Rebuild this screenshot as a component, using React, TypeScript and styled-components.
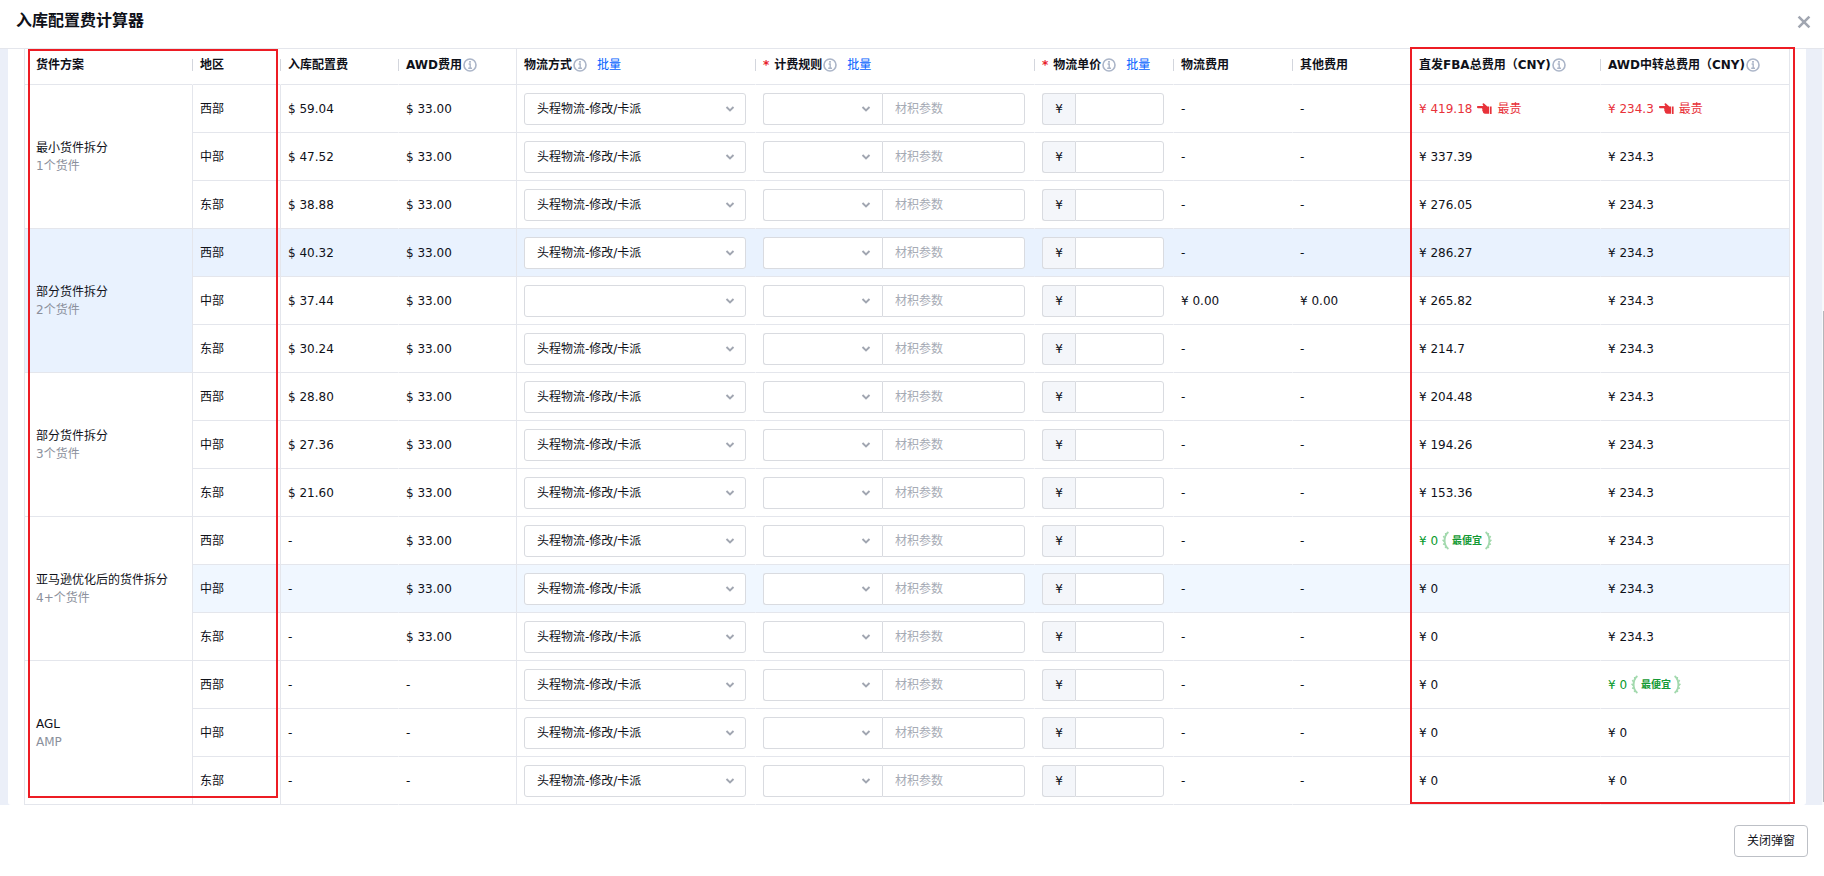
import React from "react";
import styled, { createGlobalStyle, css } from "styled-components";

const line = "#e4e6ec";

const GlobalStyle = createGlobalStyle`
  * { box-sizing: border-box; }
  body {
    margin: 0;
    background: #fff;
    color: #0f1119;
    font: 12px/18px "DejaVu Sans", "Noto Sans CJK SC", sans-serif;
  }
  button, input, select { font: inherit; color: inherit; }
`;

const Dialog = styled.div`
  min-height: 100vh;
  display: flex;
  flex-direction: column;
`;

const TitleBar = styled.header`
  display: flex;
  align-items: flex-start;
  justify-content: space-between;
  height: 49px;
  padding: 9px 12px 0 16px;
  border-bottom: 1px solid ${line};
`;

const Title = styled.h1`
  margin: 0;
  font-size: 16px;
  line-height: 24px;
  font-weight: 700;
`;

const CloseIconButton = styled.button`
  display: flex;
  margin-top: 5px;
  padding: 0;
  border: 0;
  background: none;
  color: #a1a6b1;
`;

const Body = styled.main`
  position: relative;
  padding: 0 18px 0 8px;
  background: #ebeff8;
`;

const ScrollThumb = styled.div`
  position: absolute;
  right: 0;
  bottom: 3px;
  width: 1px;
  height: 65%;
  background: #b4b6bb;
`;

const ScrollTrack = styled.div`
  position: absolute;
  right: 0;
  top: 0;
  bottom: 0;
  width: 2px;
  background: #f7f8fa;
`;

const Card = styled.section`
  padding: 0 16px;
  background: #fff;
  border-radius: 0 0 3px 3px;
`;

const TableArea = styled.div`
  position: relative;
`;

const Highlight = styled.div<{ $side: "left" | "right" }>`
  position: absolute;
  border: 2px solid #ed1c24;
  pointer-events: none;
  ${(p) =>
    p.$side === "left"
      ? css`left: 4px; top: 0; bottom: 7px; width: 14.15%;`
      : css`right: -5px; top: -2px; bottom: 1px; width: 21.8%;`}
`;

const Table = styled.table`
  width: 100%;
  table-layout: fixed;
  border-collapse: separate;
  border-spacing: 0;
  border-left: 1px solid ${line};
`;

const HeadCell = styled.th<{ $edge?: boolean; $tick?: boolean; $first?: boolean }>`
  position: relative;
  height: 36px;
  padding: 0 0 4px ${(p) => (p.$first ? 11 : 7)}px;
  border-bottom: 1px solid ${line};
  border-right: 1px solid ${(p) => (p.$edge ? line : "transparent")};
  text-align: left;
  vertical-align: middle;
  font-weight: 700;
  white-space: nowrap;
  ${(p) =>
    p.$tick &&
    css`
      &::after {
        content: "";
        position: absolute;
        right: -1px;
        top: 10px;
        width: 1px;
        height: 12px;
        background: #d3d6dd;
      }
    `}
`;

const HeadContent = styled.div`
  display: flex;
  align-items: center;
  gap: 1px;
`;

const Required = styled.span`
  margin-right: 4px;
  color: #e8202c;
  font-weight: 700;
`;

const BatchLink = styled.a`
  margin-left: 9px;
  color: #0060ff;
  font-weight: 400;
  text-decoration: none;
`;

const Row = styled.tr<{ $tone?: string }>`
  background: ${(p) => p.$tone ?? "#fff"};
`;

const Cell = styled.td<{ $edge?: boolean }>`
  height: 48px;
  padding: 0 9px 0 7px;
  border-bottom: 1px solid ${line};
  border-right: 1px solid ${(p) => (p.$edge ? line : "transparent")};
  white-space: nowrap;
`;

const PlanCell = styled.th<{ $tone?: string }>`
  padding: 0 0 0 11px;
  border-bottom: 1px solid ${line};
  border-right: 1px solid ${line};
  background: ${(p) => p.$tone ?? "#fff"};
  text-align: left;
  font-weight: 400;
`;

const PlanNote = styled.div`
  color: #8b909c;
`;

const SelectBox = styled.div`
  position: relative;
  display: flex;
  flex: 1;
  min-width: 0;
`;

const Chevron = styled.svg`
  position: absolute;
  right: 11px;
  top: 12px;
  pointer-events: none;
`;

const Select = styled.select<{ $joined?: boolean }>`
  appearance: none;
  width: 100%;
  height: 32px;
  padding: 0 28px 0 12px;
  border: 1px solid #d9dbe0;
  border-right-width: ${(p) => (p.$joined ? 0 : 1)}px;
  border-radius: ${(p) => (p.$joined ? "3px 0 0 3px" : "3px")};
  background: #fff;
`;

const Controls = styled.div`
  display: flex;
`;

const RuleSelectBox = styled(SelectBox)`
  flex: 0 0 119px;
`;

const Input = styled.input`
  flex: 1;
  min-width: 0;
  height: 32px;
  padding: 0 12px;
  border: 1px solid #d9dbe0;
  border-radius: 0 3px 3px 0;
  background: #fff;
  &::placeholder { color: #a6abb5; opacity: 1; }
`;

const Prefix = styled.span`
  display: flex;
  align-items: center;
  justify-content: center;
  width: 33px;
  height: 32px;
  border: 1px solid #d9dbe0;
  border-right: 0;
  border-radius: 3px 0 0 3px;
  background: #f4f6fa;
`;

const Amount = styled.span<{ $tone?: "high" | "low" }>`
  display: flex;
  align-items: center;
  gap: ${(p) => (p.$tone === "low" ? 4 : 5)}px;
  color: ${(p) => (p.$tone === "high" ? "#e8323a" : p.$tone === "low" ? "#0a9a2c" : "inherit")};
`;

const CheapBadge = styled.span`
  display: flex;
  align-items: center;
  gap: 2px;
  color: #149a35;
  font-size: 10px;
  font-weight: 700;
`;

const BadgeText = styled.span`
  padding-top: 1px;
`;

const Footer = styled.footer`
  display: flex;
  justify-content: flex-end;
  padding: 20px 16px;
`;

const CloseButton = styled.button`
  height: 32px;
  padding: 0 12px;
  border: 1px solid #bdc0c6;
  border-radius: 4px;
  background: #fff;
`;

const InfoIcon = () => (
  <svg width="14" height="14" viewBox="0 0 14 14" fill="none" stroke="#abb5c8" aria-hidden="true">
    <circle cx="7" cy="7" r="6" strokeWidth="1.6" />
    <path d="M5.6 6H7.2V10M5.2 10.2H9" strokeWidth="1.4" />
    <path d="M6.1 3.9H7.9" strokeWidth="1.6" />
  </svg>
);

const HandIcon = () => (
  <svg width="15" height="12" viewBox="0 0 15 12" fill="#e8323a" aria-hidden="true">
    <path d="M0.9 2.9H6.4L5.6 1.6C5.2 0.7 6.2 -0.1 7 0.5L10.4 3.4H12.2V10.8H8C6.6 10.8 5.8 9.8 5.8 8.6L5.2 7.6L5.4 6.6L5 5.2H0.9C-0.3 5.2 -0.3 2.9 0.9 2.9Z" />
    <path d="M13 3.6H14.6V11H13Z" />
  </svg>
);

const Laurel = ({ flip }: { flip?: boolean }) => (
  <svg width="8" height="19" viewBox="0 0 8 19" fill="none" stroke="#a3d9ae" aria-hidden="true">
    <g transform={flip ? "translate(8 0) scale(-1 1)" : undefined}>
      <path d="M6.4 1C1.4 5 1.4 14 6.4 18" strokeWidth="1.8" />
      <path d="M3.6 2L4 4.6M1.4 5L2.8 7.4M0.6 8.8L2.4 10.6M1 13L3.4 13.4M2.8 16.6L5 16" strokeWidth="1.6" />
    </g>
  </svg>
);

const ChevronIcon = () => (
  <Chevron width="10" height="8" viewBox="0 0 10 8" fill="none" stroke="#a1a6b1" strokeWidth="1.9" aria-hidden="true">
    <path d="M1.5 2L5 5.5L8.5 2" />
  </Chevron>
);

const columns: {
  title: string;
  width: number;
  info?: boolean;
  batch?: boolean;
  required?: boolean;
  edge?: boolean;
}[] = [
  { title: "货件方案", width: 168 },
  { title: "地区", width: 88 },
  { title: "入库配置费", width: 118 },
  { title: "AWD费用", width: 118, info: true, edge: true },
  { title: "物流方式", width: 239, info: true, batch: true },
  { title: "计费规则", width: 279, info: true, batch: true, required: true },
  { title: "物流单价", width: 139, info: true, batch: true, required: true },
  { title: "物流费用", width: 119 },
  { title: "其他费用", width: 119, edge: true },
  { title: "直发FBA总费用（CNY)", width: 189, info: true },
  { title: "AWD中转总费用（CNY)", width: 189, info: true, edge: true },
];

type RegionRow = {
  fee: string;
  awd: string;
  direct: string;
  transit: string;
  method?: string;
  freight?: string;
  other?: string;
  tone?: string;
  directTone?: "high" | "low";
  transitTone?: "high" | "low";
};

const regions = ["西部", "中部", "东部"];

const plans: { name: string; note: string; tone?: string; rows: RegionRow[] }[] = [
  {
    name: "最小货件拆分",
    note: "1个货件",
    rows: [
      { fee: "$ 59.04", awd: "$ 33.00", direct: "419.18", transit: "234.3", directTone: "high", transitTone: "high" },
      { fee: "$ 47.52", awd: "$ 33.00", direct: "337.39", transit: "234.3" },
      { fee: "$ 38.88", awd: "$ 33.00", direct: "276.05", transit: "234.3" },
    ],
  },
  {
    name: "部分货件拆分",
    note: "2个货件",
    tone: "#e9f2fe",
    rows: [
      { fee: "$ 40.32", awd: "$ 33.00", direct: "286.27", transit: "234.3", tone: "#e9f2fe" },
      { fee: "$ 37.44", awd: "$ 33.00", direct: "265.82", transit: "234.3", method: "", freight: "¥ 0.00", other: "¥ 0.00" },
      { fee: "$ 30.24", awd: "$ 33.00", direct: "214.7", transit: "234.3" },
    ],
  },
  {
    name: "部分货件拆分",
    note: "3个货件",
    rows: [
      { fee: "$ 28.80", awd: "$ 33.00", direct: "204.48", transit: "234.3" },
      { fee: "$ 27.36", awd: "$ 33.00", direct: "194.26", transit: "234.3" },
      { fee: "$ 21.60", awd: "$ 33.00", direct: "153.36", transit: "234.3" },
    ],
  },
  {
    name: "亚马逊优化后的货件拆分",
    note: "4+个货件",
    rows: [
      { fee: "-", awd: "$ 33.00", direct: "0", transit: "234.3", directTone: "low" },
      { fee: "-", awd: "$ 33.00", direct: "0", transit: "234.3", tone: "#f0f7ff" },
      { fee: "-", awd: "$ 33.00", direct: "0", transit: "234.3" },
    ],
  },
  {
    name: "AGL",
    note: "AMP",
    rows: [
      { fee: "-", awd: "-", direct: "0", transit: "0", transitTone: "low" },
      { fee: "-", awd: "-", direct: "0", transit: "0" },
      { fee: "-", awd: "-", direct: "0", transit: "0" },
    ],
  },
];

const Total = ({ value, tone }: { value: string; tone?: "high" | "low" }) => (
  <Amount $tone={tone}>
    <span>¥ {value}</span>
    {tone === "high" && (
      <>
        <HandIcon />
        <span>最贵</span>
      </>
    )}
    {tone === "low" && (
      <CheapBadge>
        <Laurel />
        <BadgeText>最便宜</BadgeText>
        <Laurel flip />
      </CheapBadge>
    )}
  </Amount>
);

export default function App() {
  return (
    <Dialog>
      <GlobalStyle />
      <TitleBar>
        <Title>入库配置费计算器</Title>
        <CloseIconButton aria-label="关闭">
          <svg width="16" height="16" viewBox="0 0 16 16" fill="none" stroke="currentColor" strokeWidth="2.6" aria-hidden="true">
            <path d="M2.6 2.6L13.4 13.4M13.4 2.6L2.6 13.4" />
          </svg>
        </CloseIconButton>
      </TitleBar>
      <Body>
        <Card>
          <TableArea>
            <Table>
              <colgroup>
                {columns.map((c) => (
                  <col key={c.title} width={c.width} />
                ))}
              </colgroup>
              <thead>
                <tr>
                  {columns.map((c, i) => (
                    <HeadCell key={c.title} scope="col" $edge={c.edge} $tick={!c.edge} $first={i === 0}>
                      <HeadContent>
                        {c.required && <Required>*</Required>}
                        <span>{c.title}</span>
                        {c.info && <InfoIcon />}
                        {c.batch && <BatchLink href="#">批量</BatchLink>}
                      </HeadContent>
                    </HeadCell>
                  ))}
                </tr>
              </thead>
              <tbody>
                {plans.map((plan) =>
                  plan.rows.map((row, i) => (
                    <Row key={plan.note + i} $tone={row.tone}>
                      {i === 0 && (
                        <PlanCell scope="rowgroup" rowSpan={3} $tone={plan.tone}>
                          <div>{plan.name}</div>
                          <PlanNote>{plan.note}</PlanNote>
                        </PlanCell>
                      )}
                      <Cell $edge>{regions[i]}</Cell>
                      <Cell>{row.fee}</Cell>
                      <Cell $edge>{row.awd}</Cell>
                      <Cell>
                        <SelectBox>
                          <Select aria-label="物流方式" defaultValue={row.method ?? "头程物流-修改/卡派"}>
                            <option value="" />
                            <option>头程物流-修改/卡派</option>
                          </Select>
                          <ChevronIcon />
                        </SelectBox>
                      </Cell>
                      <Cell>
                        <Controls>
                          <RuleSelectBox>
                            <Select aria-label="计费规则" $joined defaultValue="">
                              <option value="" />
                            </Select>
                            <ChevronIcon />
                          </RuleSelectBox>
                          <Input aria-label="材积参数" placeholder="材积参数" />
                        </Controls>
                      </Cell>
                      <Cell>
                        <Controls>
                          <Prefix>¥</Prefix>
                          <Input aria-label="物流单价" />
                        </Controls>
                      </Cell>
                      <Cell>{row.freight ?? "-"}</Cell>
                      <Cell $edge>{row.other ?? "-"}</Cell>
                      <Cell>
                        <Total value={row.direct} tone={row.directTone} />
                      </Cell>
                      <Cell $edge>
                        <Total value={row.transit} tone={row.transitTone} />
                      </Cell>
                    </Row>
                  ))
                )}
              </tbody>
            </Table>
            <Highlight $side="left" />
            <Highlight $side="right" />
          </TableArea>
        </Card>
        <ScrollTrack />
        <ScrollThumb />
      </Body>
      <Footer>
        <CloseButton>关闭弹窗</CloseButton>
      </Footer>
    </Dialog>
  );
}
